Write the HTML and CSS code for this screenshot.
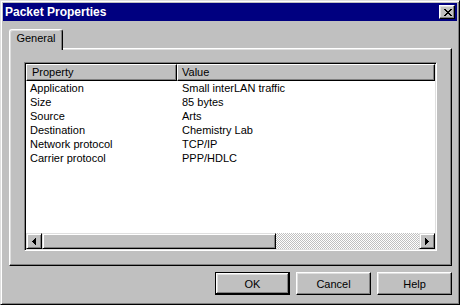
FILE: index.html
```html
<!DOCTYPE html>
<html lang="en">
<head>
    <meta charset="UTF-8">
    <meta name="viewport" content="width=device-width, initial-scale=1.0">
    <title>Packet Properties</title>
    <link rel="stylesheet" href="styles.css">
</head>
<body>

<div class="window">
    <!-- Title bar -->
    <div class="titlebar">
        <span class="title">Packet Properties</span>
        <button class="close" aria-label="Close">
            <svg width="8" height="7" viewBox="0 0 8 7" shape-rendering="crispEdges">
                <path fill="#000" d="M0 0h2v1H0zM6 0h2v1H6zM1 1h2v1H1zM5 1h2v1H5zM2 2h4v1H2zM3 3h2v1H3zM2 4h4v1H2zM1 5h2v1H1zM5 5h2v1H5zM0 6h2v1H0zM6 6h2v1H6z"/>
            </svg>
        </button>
    </div>

    <div class="content">
        <!-- Tabs -->
        <div class="tabs">
            <div class="tab active">General</div>
        </div>

        <div class="panel">
            <div class="listview">
                <div class="header">
                    <div class="hcell col-prop">Property</div>
                    <div class="hcell col-val">Value</div>
                </div>
                <div class="rows">
                    <div class="row"><span class="cell col-prop">Application</span><span class="cell col-val">Small interLAN traffic</span></div>
                    <div class="row"><span class="cell col-prop">Size</span><span class="cell col-val">85 bytes</span></div>
                    <div class="row"><span class="cell col-prop">Source</span><span class="cell col-val">Arts</span></div>
                    <div class="row"><span class="cell col-prop">Destination</span><span class="cell col-val">Chemistry Lab</span></div>
                    <div class="row"><span class="cell col-prop">Network protocol</span><span class="cell col-val">TCP/IP</span></div>
                    <div class="row"><span class="cell col-prop">Carrier protocol</span><span class="cell col-val">PPP/HDLC</span></div>
                </div>
                <!-- Horizontal scrollbar -->
                <div class="hscroll">
                    <div class="sbtn">
                        <svg width="4" height="7" viewBox="0 0 4 7" shape-rendering="crispEdges">
                            <path fill="#000" d="M3 0h1v7H3zM2 1h1v5H2zM1 2h1v3H1zM0 3h1v1H0z"/>
                        </svg>
                    </div>
                    <div class="thumb"></div>
                    <div class="track"></div>
                    <div class="sbtn">
                        <svg width="4" height="7" viewBox="0 0 4 7" shape-rendering="crispEdges">
                            <path fill="#000" d="M0 0h1v7H0zM1 1h1v5H1zM2 2h1v3H2zM3 3h1v1H3z"/>
                        </svg>
                    </div>
                </div>
            </div>
        </div>

        <!-- Dialog buttons -->
        <div class="buttons">
            <button class="btn default">OK</button>
            <button class="btn">Cancel</button>
            <button class="btn">Help</button>
        </div>
    </div>
</div>

</body>
</html>
```

FILE: styles.css
```css
body {
    margin: 0;
    background-color: #c0c0c0;
    font-family: "Liberation Sans", Arial, sans-serif;
    font-size: 11px;
    color: #000;
}
.window {
    box-sizing: border-box;
    height: 305px;
    border: 1px solid;
    border-color: #dfdfdf #000 #000 #dfdfdf;
    box-shadow: inset 1px 1px #fff, inset -1px -1px #808080;
    padding: 2px;
    background-color: #c0c0c0;
}
.titlebar {
    display: flex;
    align-items: center;
    justify-content: space-between;
    height: 18px;
    padding: 0 2px;
    background-color: #000080;
}
.title {
    color: #fff;
    font-weight: bold;
    font-size: 12px;
    line-height: 18px;
}
.close {
    box-sizing: border-box;
    width: 16px;
    height: 14px;
    padding: 0 0 0 1px;
    display: flex;
    align-items: center;
    justify-content: center;
    background-color: #c0c0c0;
    border: 1px solid;
    border-color: #fff #000 #000 #fff;
    box-shadow: inset -1px -1px #808080, inset 1px 1px #dfdfdf;
}
.content {
    padding: 8px 5px 0 6px;
}
.tabs {
    display: flex;
    margin-bottom: -2px;
}
.tab {
    position: relative;
    z-index: 1;
    box-sizing: border-box;
    width: 54px;
    height: 21px;
    padding-top: 1px;
    line-height: 14px;
    text-align: center;
    background-color: #c0c0c0;
    border: 1px solid;
    border-color: #fff #000 transparent #fff;
    border-bottom: none;
    border-radius: 3px 3px 0 0;
    box-shadow: inset -1px 0 #808080, inset 1px 1px #dfdfdf;
}
.panel {
    box-sizing: border-box;
    height: 218px;
    border: 1px solid;
    border-color: #fff #000 #000 #fff;
    box-shadow: inset -1px -1px #808080, inset 1px 1px #dfdfdf;
    padding: 13px 14px 14px 14px;
}
.listview {
    box-sizing: border-box;
    height: 100%;
    display: flex;
    flex-direction: column;
    background-color: #fff;
    border: 1px solid;
    border-color: #808080 #fff #fff #808080;
    box-shadow: inset 1px 1px #000, inset -1px -1px #dfdfdf;
    padding: 1px;
}
.header {
    display: flex;
    height: 17px;
}
.hcell {
    box-sizing: border-box;
    height: 17px;
    line-height: 15px;
    padding-left: 5px;
    background-color: #c0c0c0;
    border: 1px solid;
    border-color: #fff #000 #000 #fff;
    box-shadow: inset -1px -1px #808080;
}
.hcell.col-prop {
    width: 151px;
}
.hcell.col-val {
    flex: 1;
    padding-left: 4px;
}
.rows {
    flex: 1;
}
.row {
    display: flex;
    line-height: 14px;
    white-space: nowrap;
}
.cell.col-prop {
    width: 151px;
    padding-left: 4px;
    box-sizing: border-box;
}
.cell.col-val {
    padding-left: 5px;
}
.hscroll {
    display: flex;
    height: 16px;
}
.sbtn, .thumb {
    box-sizing: border-box;
    height: 16px;
    background-color: #c0c0c0;
    border: 1px solid;
    border-color: #dfdfdf #000 #000 #dfdfdf;
    box-shadow: inset 1px 1px #fff, inset -1px -1px #808080;
}
.sbtn {
    width: 16px;
    display: flex;
    align-items: center;
    justify-content: center;
}
.thumb {
    width: 234px;
}
.track {
    flex: 1;
    background-color: #fff;
    background-image: repeating-conic-gradient(#c0c0c0 0 25%, #fff 0 50%);
    background-size: 2px 2px;
}
.buttons {
    display: flex;
    justify-content: flex-end;
    gap: 6px;
    margin-top: 6px;
}
.btn {
    box-sizing: border-box;
    width: 75px;
    height: 23px;
    padding: 0;
    font-family: inherit;
    font-size: 11px;
    color: #000;
    background-color: #c0c0c0;
    border: 1px solid;
    border-color: #fff #000 #000 #fff;
    box-shadow: inset -1px -1px #808080, inset 1px 1px #dfdfdf;
}
.btn.default {
    border-color: #000;
    box-shadow: inset -1px -1px #000, inset 1px 1px #fff, inset -2px -2px #808080, inset 2px 2px #dfdfdf;
}
```
